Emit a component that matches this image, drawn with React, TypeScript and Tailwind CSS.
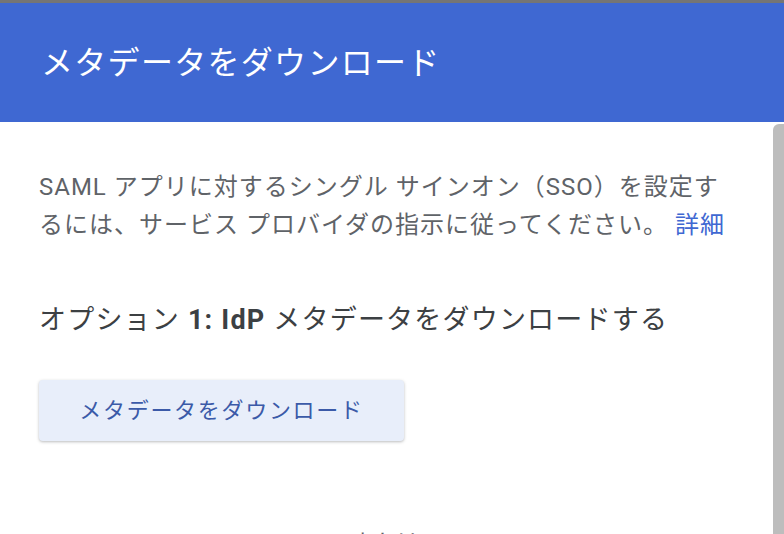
const font = { fontFamily: 'Roboto, "Noto Sans CJK JP", sans-serif' };

export default function App() {
  return (
    <div className="w-[784px] h-[534px] overflow-hidden flex flex-col bg-white" style={font}>
      <div className="h-[3px] bg-[#757575]" />
      <header className="h-[119px] shrink-0 bg-[#3f68d2] px-[41px] flex items-center">
        <h1 className="text-[32px] tracking-[1.3px] text-white font-normal leading-none">メタデータをダウンロード</h1>
      </header>
      <div className="flex flex-1 min-h-0">
        <main className="flex-1 pl-[39px] pr-[42px] pt-[46px]">
          <p className="text-[24px] leading-[38px] tracking-[1px] text-[#5f6368]">
            SAML アプリに対するシングル サインオン（SSO）を設定するには、サービス プロバイダの指示に従ってください。{' '}
            <a className="text-[#3f68d2]">詳細</a>
          </p>
          <h2 className="mt-[58px] text-[27px] leading-[36px] tracking-[1.2px] text-[#3c4043] font-normal">
            オプション <b className="font-bold">1:</b> <b className="font-bold">IdP</b> メタデータをダウンロードする
          </h2>
          <button className="mt-[42px] w-[365px] h-[61px] rounded-[4px] bg-[#e8eefa] text-[22px] tracking-[1.7px] text-[#3b5aa8] shadow-[0_1px_3px_rgba(60,64,67,0.35)] flex items-center justify-center">
            メタデータをダウンロード
          </button>
          <div className="mt-[86px] text-center text-[23px] text-[#5f6368]">または</div>
        </main>
        <div className="w-[11px] mt-[2px] rounded-tl-[6px] bg-[#bdbdbd]" />
      </div>
    </div>
  );
}
